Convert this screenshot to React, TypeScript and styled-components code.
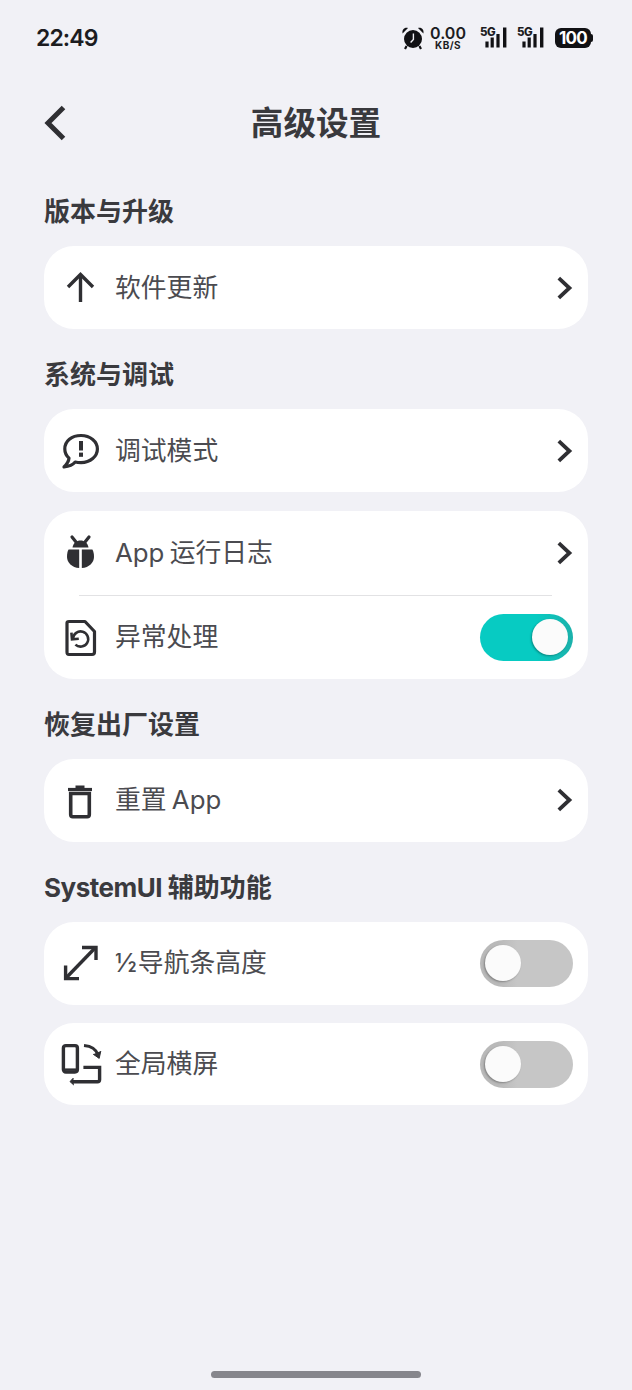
import React from "react";
import styled, { createGlobalStyle } from "styled-components";

const Global = createGlobalStyle`
  html, body { margin: 0; padding: 0; background: #f1f1f6; }
  * { box-sizing: border-box; }
`;
const FONT = `Inter, "Noto Sans CJK SC", "Noto Sans", sans-serif`;

const Page = styled.div`
  width: 632px; height: 1390px; display: flex; flex-direction: column;
  background: #f1f1f6; font-family: ${FONT}; color: #39393d; overflow: hidden;
`;
const StatusBar = styled.div`
  height: 76px; display: flex; align-items: flex-start; justify-content: space-between;
  padding: 24px 39px 0 36px;
`;
const Clock = styled.div`
  font-size: 23px; line-height: 28px; font-weight: 600; color: #1c1c1f; letter-spacing: -0.9px;
`;
const StatusIcons = styled.div`
  display: flex; align-items: center; height: 28px;
`;
const Speed = styled.div`
  margin-left: 5px; width: 36px; display: flex; flex-direction: column; align-items: center; color: #1c1c1f;
`;
const SpeedValue = styled.span`
  font-size: 16px; line-height: 12px; font-weight: 600;
`;
const SpeedUnit = styled.span`
  margin-top: 2px; font-size: 10px; line-height: 8px; font-weight: 700; letter-spacing: 0.4px;
`;
const SignalWrap = styled.div<{ $ml: number }>`
  position: relative; width: 30px; height: 24px; margin-left: ${p => p.$ml}px;
`;
const SignalLabel = styled.span`
  position: absolute; left: 0; top: 0; font-size: 11.5px; line-height: 12px; font-weight: 800; color: #1c1c1f;
  letter-spacing: -0.6px;
`;
const Battery = styled.div`
  margin-left: 8px; height: 20px; display: flex; align-items: center;
`;
const BatteryBody = styled.div`
  width: 36px; height: 20px; border-radius: 6px; background: #111114; color: #fff;
  font-size: 17px; line-height: 20px; font-weight: 700; text-align: center; letter-spacing: -0.7px;
`;
const BatteryCap = styled.div`
  width: 2px; height: 8px; background: #111114; border-radius: 0 2px 2px 0;
`;
const Header = styled.header`
  height: 94px; padding: 0 44px; position: relative; display: flex; align-items: center; justify-content: center;
`;
const BackButton = styled.div`
  position: absolute; left: 43px; top: 28px; width: 24px; height: 38px; display: flex;
`;
const Title = styled.h1`
  margin: 0; font-size: 32.6px; line-height: 44px; font-weight: 700; color: #39393d;
`;
const Content = styled.main`
  padding: 22px 44px 0; display: flex; flex-direction: column; gap: 26px;
`;
const Section = styled.section`
  display: flex; flex-direction: column; gap: 18.5px;
`;
const SectionTitle = styled.h2`
  margin: 0 0 -4.5px; height: 40px; font-size: 26px; line-height: 40px; font-weight: 700; color: #3a3a3e;
`;
const TitleLatin = styled.span`
  letter-spacing: -0.5px;
`;
const Card = styled.div`
  background: #fff; border-radius: 30px; display: flex; flex-direction: column;
`;
const Row = styled.div<{ $h?: number }>`
  height: ${p => p.$h ?? 83}px; display: flex; align-items: center; padding: 0 15px 0 14px;
`;
const IconSlot = styled.div`
  width: 44px; height: 44px; flex: none; display: flex; align-items: center; justify-content: center; color: #2f2f33;
`;
const Label = styled.span`
  margin-left: 13px; flex: 1; font-size: 25.8px; line-height: 36px; font-weight: 400; color: #4b4b50;
  word-spacing: -2px;
`;
const Fraction = styled.span`
  letter-spacing: 1px;
`;
const Divider = styled.div`
  height: 1px; margin: 0 36px 0 35px; background: #e2e2e4;
`;
const Toggle = styled.div<{ $on?: boolean }>`
  width: 93px; height: 47px; flex: none; border-radius: 24px; display: flex; align-items: center;
  justify-content: ${p => (p.$on ? "flex-end" : "flex-start")};
  padding: 0 5px;
  background: ${p => (p.$on ? "linear-gradient(90deg,#07cbc2 60%,#1bb1ab)" : "linear-gradient(90deg,#b9b9b9 20%,#c6c6c6 40%)")};
`;
const Knob = styled.div`
  width: 36px; height: 36px; border-radius: 50%; background: #fbfbfb; box-shadow: -1px 1px 2px rgba(0,0,0,.3);
`;
const HomeBar = styled.div`
  margin: auto auto 12px; width: 210px; height: 7px; border-radius: 4px; background: #86868c;
`;

const Chevron = () => (
  <svg width="16" height="24" viewBox="0 0 16 24" fill="none">
    <path d="M1.8 2.2 L12.4 12 L1.8 21.8" stroke="#2f2f33" strokeWidth="3.8" />
  </svg>
);

const ArrowUp = () => (
  <svg width="44" height="44" viewBox="0 0 44 44" fill="none" stroke="currentColor" strokeWidth="3.4">
    <path d="M22.5 8.5V36" />
    <path d="M10 21 L22.5 8.5 L35 21" />
  </svg>
);
const ChatAlert = () => (
  <svg width="44" height="44" viewBox="0 0 44 44" fill="none">
    <path d="M23 6.5C13.6 6.5 6.8 12.2 6.8 20C6.8 23.6 8.4 26.8 11 29.1C10.8 32 9 35 6 38C11.2 37.4 15 35.6 17.2 33C18.8 33.4 21 33.6 23 33.6C32.4 33.6 39.4 27.4 39.4 20C39.4 12.6 32.4 6.5 23 6.5Z" stroke="currentColor" strokeWidth="3.2" strokeLinejoin="round" />
    <rect x="21" y="12" width="4" height="9.5" fill="currentColor" />
    <rect x="21" y="23.6" width="4" height="4.2" fill="currentColor" />
  </svg>
);
const Bug = () => (
  <svg width="44" height="44" viewBox="0 0 44 44" fill="none">
    <path d="M14 6 L18 11 M31 6 L27 11" stroke="currentColor" strokeWidth="3.2" strokeLinecap="round" />
    <path d="M14.5 16.6C15.2 11.6 18.6 9.4 22.5 9.4C26.4 9.4 29.8 11.6 30.5 16.6Z" fill="currentColor" />
    <path d="M10.6 18.4H21.2V37C14 36.6 9 31.6 9 26C9 23 9.4 20.4 10.6 18.4Z" fill="currentColor" />
    <path d="M34.4 18.4H23.8V37C31 36.6 36 31.6 36 26C36 23 35.6 20.4 34.4 18.4Z" fill="currentColor" />
  </svg>
);
const FileRestore = () => (
  <svg width="44" height="44" viewBox="0 0 44 44" fill="none" stroke="currentColor">
    <path d="M11 6.5H27L36.5 16.5V37C36.5 38.6 35.6 39.5 34 39.5H11C9.4 39.5 9 38.6 9 37V8C9 7 10 6.5 11 6.5Z" strokeWidth="3.2" strokeLinejoin="round" />
    <path d="M15 23.6A7.6 7.6 0 1 1 17.4 29.6" strokeWidth="2.6" />
    <path d="M13.4 17.6L14 24.4L20.8 23.8" strokeWidth="2.6" />
  </svg>
);
const Trash = () => (
  <svg width="44" height="44" viewBox="0 0 44 44" fill="none">
    <path d="M10 11.5H34" stroke="currentColor" strokeWidth="3.2" />
    <path d="M17.5 9H26.5" stroke="currentColor" strokeWidth="3" />
    <path d="M12.7 15.5V36.6C12.7 38 13.4 38.7 14.8 38.7H29.2C30.6 38.7 31.3 38 31.3 36.6V15.5H12.7Z" stroke="currentColor" strokeWidth="3.6" />
  </svg>
);
const Resize = () => (
  <svg width="44" height="44" viewBox="0 0 44 44" fill="none" stroke="currentColor" strokeWidth="3.4">
    <path d="M8 37 L37 7" />
    <path d="M24 6.5H38V19" />
    <path d="M7.6 24.5V37.6H21" />
  </svg>
);
const Rotate = () => (
  <svg width="44" height="44" viewBox="0 0 44 44" fill="none" stroke="currentColor">
    <rect x="5.4" y="3.6" width="14" height="26.4" rx="2.4" strokeWidth="3.4" />
    <path d="M5 27.6H20" strokeWidth="2.4" />
    <path d="M26 3.6C33.4 4.2 38.4 7.8 40.4 13.4" strokeWidth="3" />
    <path d="M35.2 12.2L41.2 16.4L42.8 9" fill="currentColor" strokeWidth="1" />
    <path d="M25.4 25.4H41.6V37.6C41.6 39 40.8 39.8 39.4 39.8H14" strokeWidth="3.4" />
    <path d="M15.4 36L12 39.6L15.8 43" fill="currentColor" strokeWidth="1" />
  </svg>
);

const AlarmIcon = () => (
  <svg width="24" height="24" viewBox="0 0 24 24">
    <circle cx="12" cy="13" r="9" fill="#111114" />
    <path d="M1.6 7.6C.8 4 3 1.2 7 2Z M22.4 7.6C23.2 4 21 1.2 17 2Z" fill="#111114" />
    <path d="M5.6 20L4 23M18.4 20L20 23" stroke="#111114" strokeWidth="2.2" />
    <path d="M12.4 7.6V13.4L9.6 16.4" stroke="#f1f1f6" strokeWidth="1.4" fill="none" />
  </svg>
);
const SignalBars = () => (
  <svg width="30" height="24" viewBox="0 0 30 24">
    <rect x="5.4" y="15.5" width="3.2" height="6" fill="#111114" />
    <rect x="10.6" y="11.5" width="3.2" height="10" fill="#111114" />
    <rect x="16.4" y="8" width="3.2" height="13.5" fill="#111114" />
    <rect x="23" y="1.5" width="3.4" height="20" fill="#111114" />
  </svg>
);
const Signal = ({ ml }: { ml: number }) => (
  <SignalWrap $ml={ml}>
    <SignalBars />
    <SignalLabel>5G</SignalLabel>
  </SignalWrap>
);

const App: React.FC = () => (
  <Page>
    <Global />
    <StatusBar>
      <Clock>22:49</Clock>
      <StatusIcons>
        <AlarmIcon />
        <Speed>
          <SpeedValue>0.00</SpeedValue>
          <SpeedUnit>KB/S</SpeedUnit>
        </Speed>
        <Signal ml={14} />
        <Signal ml={7} />
        <Battery>
          <BatteryBody>100</BatteryBody>
          <BatteryCap />
        </Battery>
      </StatusIcons>
    </StatusBar>
    <Header>
      <BackButton>
        <svg width="24" height="38" viewBox="0 0 24 38" fill="none">
          <path d="M20.5 3.5 L5 19 L20.5 34.5" stroke="#2f2f33" strokeWidth="5" />
        </svg>
      </BackButton>
      <Title>高级设置</Title>
    </Header>
    <Content>
      <Section>
        <SectionTitle>版本与升级</SectionTitle>
        <Card>
          <Row><IconSlot><ArrowUp /></IconSlot><Label>软件更新</Label><Chevron /></Row>
        </Card>
      </Section>
      <Section>
        <SectionTitle>系统与调试</SectionTitle>
        <Card>
          <Row><IconSlot><ChatAlert /></IconSlot><Label>调试模式</Label><Chevron /></Row>
        </Card>
        <Card>
          <Row $h={84}><IconSlot><Bug /></IconSlot><Label>App 运行日志</Label><Chevron /></Row>
          <Divider />
          <Row $h={83}><IconSlot><FileRestore /></IconSlot><Label>异常处理</Label><Toggle $on><Knob /></Toggle></Row>
        </Card>
      </Section>
      <Section>
        <SectionTitle>恢复出厂设置</SectionTitle>
        <Card>
          <Row><IconSlot><Trash /></IconSlot><Label>重置 App</Label><Chevron /></Row>
        </Card>
      </Section>
      <Section>
        <SectionTitle><TitleLatin>SystemUI </TitleLatin>辅助功能</SectionTitle>
        <Card>
          <Row><IconSlot><Resize /></IconSlot><Label><Fraction>½</Fraction>导航条高度</Label><Toggle><Knob /></Toggle></Row>
        </Card>
        <Card>
          <Row $h={82}><IconSlot><Rotate /></IconSlot><Label>全局横屏</Label><Toggle><Knob /></Toggle></Row>
        </Card>
      </Section>
    </Content>
    <HomeBar />
  </Page>
);

export default App;
